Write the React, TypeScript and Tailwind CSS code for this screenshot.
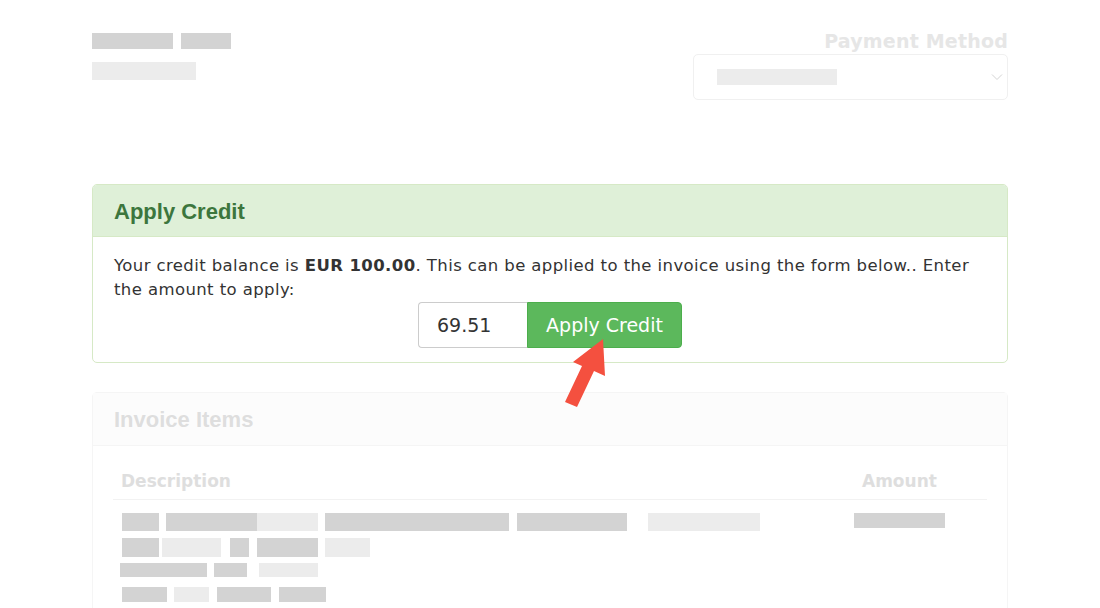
import React from 'react';

type Block = [number, number, string];

const DARK = 'bg-[#d3d3d3]';
const LIGHT = 'bg-[#ececec]';

// blocks are [left, right, colour] in page x coordinates
const rows: { mt: string; h: string; blocks: Block[] }[] = [
    {
        mt: 'mt-[13px]',
        h: 'h-[18px]',
        blocks: [
            [122, 159, DARK],
            [166, 257, DARK],
            [257, 318, LIGHT],
            [325, 509, DARK],
            [517, 627, DARK],
            [648, 760, LIGHT],
        ],
    },
    {
        mt: 'mt-[7px]',
        h: 'h-[19px]',
        blocks: [
            [122, 159, DARK],
            [162, 221, LIGHT],
            [230, 249, DARK],
            [257, 318, DARK],
            [325, 370, LIGHT],
        ],
    },
    {
        mt: 'mt-[6px]',
        h: 'h-[14px]',
        blocks: [
            [120, 207, DARK],
            [214, 247, DARK],
            [259, 318, LIGHT],
        ],
    },
    {
        mt: 'mt-[10px]',
        h: 'h-[15px]',
        blocks: [
            [122, 167, DARK],
            [174, 209, LIGHT],
            [217, 271, DARK],
            [279, 326, DARK],
        ],
    },
];

const RedactedRow: React.FC<{ blocks: Block[]; h: string; mt: string; origin: number }> = ({ blocks, h, mt, origin }) => {
    let cursor = origin;
    return (
        <div className={`flex ${mt}`}>
            {blocks.map(([l, r, c], i) => {
                const gap = l - cursor;
                cursor = r;
                return <div key={i} className={`${h} ${c}`} style={{ marginLeft: gap, width: r - l }} />;
            })}
        </div>
    );
};

const Arrow: React.FC = () => (
    <svg className="absolute left-0 top-0 pointer-events-none" width="1100" height="608" viewBox="0 0 1100 608">
        <polygon
            points="603,339 605,376 594,371 577,407 565,402 582,366 573,362"
            fill="#f4503f"
        />
    </svg>
);

export default function App() {
    return (
        <div className="relative w-[1100px] h-[608px] overflow-hidden bg-white" style={{ fontFamily: '"DejaVu Sans", Verdana, sans-serif' }}>
            <div className="ml-[92px] w-[916px] pt-[30px]">
                {/* top: customer info + payment method */}
                <div className="flex justify-between">
                    <div className="flex flex-col pt-[3px]">
                        <div className="flex gap-[8px]">
                            <div className="w-[81px] h-[16px] bg-[#d3d3d3]" />
                            <div className="w-[50px] h-[16px] bg-[#d3d3d3]" />
                        </div>
                        <div className="mt-[13px] w-[104px] h-[18px] bg-[#ececec]" />
                    </div>
                    <div className="flex flex-col items-end">
                        <p className="text-[19px] leading-[22px] font-bold text-[#e6e6e6] tracking-[0.2px]">Payment Method</p>
                        <div className="mt-[2px] w-[315px] h-[46px] border border-[#f0f0f0] rounded-[5px] flex items-center justify-between pl-[23px] pr-[4px]">
                            <div className="w-[120px] h-[16px] bg-[#ececec]" />
                            <svg width="12" height="8" viewBox="0 0 12 8">
                                <path d="M1 1.5 L6 6.5 L11 1.5" fill="none" stroke="#d4d4d4" strokeWidth="1" />
                            </svg>
                        </div>
                    </div>
                </div>

                {/* apply credit panel */}
                <div className="mt-[84px] border border-[#d6e9c6] rounded-[5px] overflow-hidden">
                    <div className="h-[52px] bg-[#dff0d8] border-b border-[#d6e9c6] px-[21px] pt-[14px]">
                        <h3 className="text-[22px] leading-[26px] font-bold text-[#3c763d]" style={{ fontFamily: '"Liberation Sans", Arial, sans-serif' }}>
                            Apply Credit
                        </h3>
                    </div>
                    <div className="px-[21px] pt-[17px] pb-[14px]">
                        <p className="text-[16.5px] leading-[24px] tracking-[0.4px] text-[#333]">
                            Your credit balance is <b>EUR 100.00</b>. This can be applied to the invoice using the form below.. Enter the amount to apply:
                        </p>
                        <div className="flex justify-center">
                            <div className="w-[109px] h-[46px] border border-[#ccc] border-r-0 rounded-l-[4px] pl-[18px] flex items-center text-[19px] text-[#333]">
                                69.51
                            </div>
                            <button className="w-[155px] h-[46px] bg-[#5cb85c] border border-[#4cae4c] rounded-r-[4px] text-white text-[19px] flex items-center justify-center">
                                Apply Credit
                            </button>
                        </div>
                    </div>
                </div>

                {/* invoice items panel */}
                <div className="mt-[29px] border border-[#f5f5f5] rounded-[5px] h-[300px]">
                    <div className="h-[53px] bg-[#fcfcfc] border-b border-[#f5f5f5] px-[21px] pt-[14px]">
                        <h3 className="text-[22px] leading-[26px] font-bold text-[#dedede]" style={{ fontFamily: '"Liberation Sans", Arial, sans-serif' }}>
                            Invoice Items
                        </h3>
                    </div>
                    <div className="px-[20px] pt-[15px]">
                        <div className="flex border-b border-[#f2f2f2] pt-[8px] pb-[6px] text-[17px] leading-[24px] font-bold text-[#dedede]">
                            <div className="flex-1 pl-[8px]">Description</div>
                            <div className="w-[125px]">Amount</div>
                        </div>
                        <div className="flex">
                            <div className="flex-1 flex flex-col">
                                {rows.map((r, i) => (
                                    <RedactedRow key={i} blocks={r.blocks} h={r.h} mt={r.mt} origin={113} />
                                ))}
                            </div>
                            <div className="w-[133px] pt-[13px]">
                                <div className="w-[91px] h-[15px] bg-[#d3d3d3]" />
                            </div>
                        </div>
                    </div>
                </div>
            </div>
            <Arrow />
        </div>
    );
}
